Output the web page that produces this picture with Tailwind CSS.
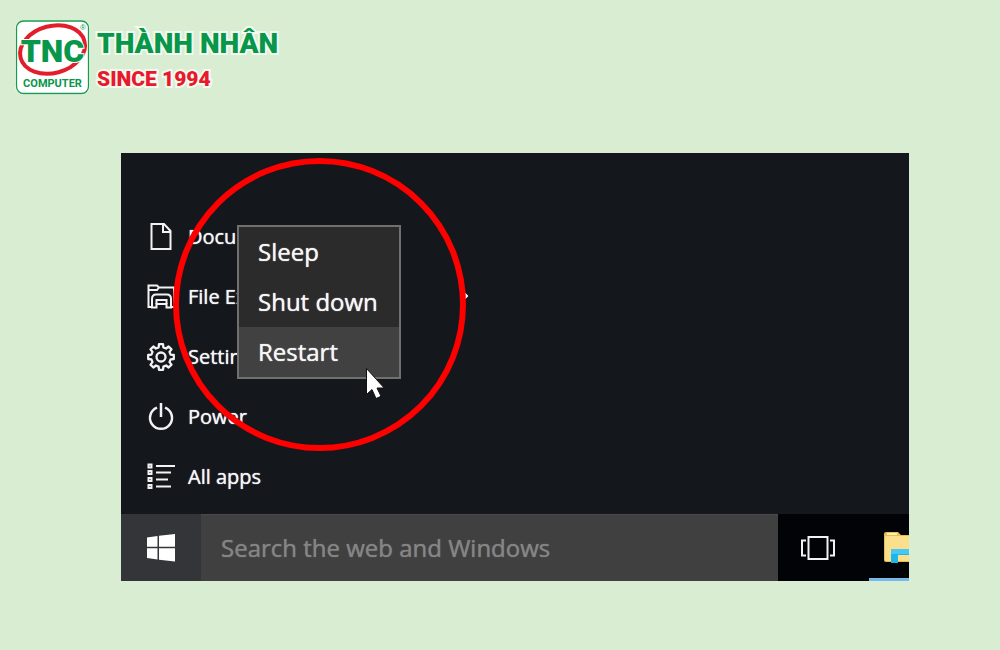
<!DOCTYPE html>
<html lang="vi">
  <head>
    <meta charset="UTF-8" />
    <meta name="viewport" content="width=device-width, initial-scale=1.0" />
    <script src="https://cdn.jsdelivr.net/npm/@tailwindcss/browser@4"></script>
    <title>Thành Nhân TNC</title>
  </head>
  <body class="min-h-screen bg-[#d9edd3] font-['Open_Sans','Noto_Sans',sans-serif]">
    <header class="flex items-start gap-[7px] px-[15px] pt-5">
      <svg class="h-[75px] w-[75px] shrink-0" viewBox="0 0 75 75" role="img" aria-label="TNC Computer">
        <rect width="75" height="75" rx="9" fill="#f2faef" />
        <rect x="1.500" y="1" width="72" height="72.500" rx="7" fill="#fff" stroke="#1a9a50" stroke-width="1.300" />
        <ellipse cx="37.500" cy="29.500" rx="33" ry="23.500" transform="rotate(-15 37.500 29.500)" fill="none" stroke="#e31e2b" stroke-width="4" />
        <text x="37.500" y="42" text-anchor="middle" font-family="Roboto, sans-serif" font-weight="900" font-size="32" fill="#07964a" stroke="#fff" stroke-width="2" paint-order="stroke">TNC</text>
        <text x="68" y="10" text-anchor="middle" font-family="Liberation Sans, sans-serif" font-size="8" fill="#07964a">®</text>
        <text x="37.500" y="67" text-anchor="middle" font-family="Roboto, sans-serif" font-weight="700" font-size="11" fill="#07964a">COMPUTER</text>
      </svg>
      <div class="pt-1 font-['Roboto',sans-serif] font-black whitespace-nowrap">
        <p class="text-[28px] leading-10 text-[#07964a] [-webkit-text-stroke:4px_#f2faef] [paint-order:stroke_fill]">THÀNH NHÂN</p>
        <p class="text-[21px] leading-[30px] text-[#e8192c] [-webkit-text-stroke:4px_#f2faef] [paint-order:stroke_fill]">SINCE 1994</p>
      </div>
    </header>

    <main class="pt-[58px] pr-[91px] pb-16 pl-[121px]">
      <div class="relative overflow-hidden bg-[#14181c] text-[#f6f6f6]">
        <!-- Start menu -->
        <nav class="pt-[54px] pb-[7px] pl-[26px]">
          <ul class="text-[20px] [text-shadow:0_0_1px_#fff]">
            <li>
              <a href="#" aria-label="Documents" class="flex h-[60px] items-center gap-[13px]">
                <svg class="h-7 w-7" viewBox="0 0 28 28" fill="none" stroke="#f2f2f2" stroke-width="2">
                  <path d="M4.500 1h12.500l6.500 7V26h-19zM16 1v8h7" />
                </svg>
                Docum
              </a>
            </li>
            <li>
              <a href="#" aria-label="File Explorer" class="flex h-[60px] items-center gap-[13px]">
                <svg class="h-7 w-7" viewBox="0 0 28 28" fill="none" stroke="#f2f2f2" stroke-width="2">
                  <path d="M5 24H1.500V2.500H10l2 2h15V24h-3M1.500 7H10l2-2.500" />
                  <path d="M5 24.500V16q0-4.500 4-4.500h11q4 0 4 4.500v8.500h-4.500V21h-10v3.500z" />
                  <path d="M9.500 21v-4h10v4" />
                </svg>
                File Ex
                <svg class="mr-[440px] ml-auto h-4 w-2" viewBox="0 0 8 16" fill="none" stroke="#fff" stroke-width="2">
                  <path d="M1 2l5 5-5 5" />
                </svg>
              </a>
            </li>
            <li>
              <a href="#" aria-label="Settings" class="flex h-[60px] items-center gap-[13px]">
                <svg class="h-7 w-7" viewBox="0 0 28 28" fill="none" stroke="#f2f2f2" stroke-width="2.300" stroke-linejoin="round">
                  <path d="M11.600 4.400L12 1.200h4l.4 3.200 2.700 1.100 2.500-2 2.900 2.900-2 2.500 1.100 2.700 3.200.4v4l-3.200.4-1.100 2.700 2 2.500-2.900 2.900-2.500-2-2.700 1.100-.4 3.200h-4l-.4-3.200-2.700-1.100-2.500 2-2.900-2.900 2-2.500-1.100-2.700-3.200-.4v-4l3.200-.4 1.100-2.700-2-2.500 2.900-2.900 2.500 2z" />
                  <circle cx="14" cy="14" r="4.500" />
                </svg>
                Settin
              </a>
            </li>
            <li>
              <a href="#" class="flex h-[60px] items-center gap-[13px]">
                <svg class="h-7 w-7" viewBox="0 0 28 28" fill="none" stroke="#f2f2f2" stroke-width="2.500">
                  <path d="M10 4.600a11 11 0 1 0 8 0M14 0v14" />
                </svg>
                Power
              </a>
            </li>
            <li>
              <a href="#" class="flex h-[60px] items-center gap-[13px]">
                <svg class="h-7 w-7" viewBox="0 0 28 28" fill="none" stroke="#f2f2f2" stroke-width="2">
                  <path d="M1.500 1.500h3v3h-3zM1.500 8h3v3h-3zM1.500 15h3v3h-3zM1.500 22h3v3h-3z" />
                  <path d="M9 3h19M9 9.500h15M9 16.500h12M9 23.500h15" />
                </svg>
                All apps
              </a>
            </li>
          </ul>
        </nav>

        <!-- Taskbar -->
        <div class="flex h-[67px] bg-[#020306]">
          <button class="flex w-20 shrink-0 items-center bg-[#333539] pl-[26px]" aria-label="Start">
            <svg class="h-7 w-7" viewBox="0 0 28 28" fill="#fff">
              <path d="M0 3.500l10.500-1.500V12.800H0zM12 1.800L28 0v12.800H12zM0 14.300h10.500V25.500L0 24zM12 14.300h16V27.500l-16-1.800z" />
            </svg>
          </button>
          <input
            type="text"
            aria-label="Search"
            placeholder="Search the web and Windows"
            class="min-w-0 flex-1 border-t border-[#4a4a4a] bg-[#404040] px-5 pb-px text-2xl [text-shadow:0_0_1px_#858585] placeholder:text-[#858585]"
          />
          <button class="flex w-[91px] shrink-0 items-center pl-[22px]" aria-label="Task view">
            <svg class="h-6 w-9" viewBox="0 0 36 24" fill="none" stroke="#f2f2f2" stroke-width="2">
              <path d="M8.500 1h19v22h-19zM6 4.500H2v15h4M30 4.500h4v15h-4" />
            </svg>
          </button>
          <button class="flex w-10 shrink-0 items-center overflow-hidden border-b-[3px] border-[#76b9ed] pt-[2px] pl-[15px]" aria-label="File Explorer">
            <svg class="h-[31px] w-[38px] shrink-0" viewBox="0 0 38 31">
              <path d="M0 2q0-2 2-2h12l3 3h21v27H2q-2 0-2-2z" fill="#e9bd52" />
              <path d="M2 4h36v25H2q-1 0-1-1V5z" fill="#fbdf8b" />
              <path d="M3 2h10" stroke="#fff0b8" stroke-width="2" />
              <path d="M7 17h31v14h-6v-8H14v8H7z" fill="#20b5ea" />
              <path d="M7 17h31v5H7z" fill="#45c8f5" />
            </svg>
          </button>
        </div>

        <!-- Power options -->
        <div class="absolute top-[72px] left-[116px] w-[164px] border-2 border-[#707070] bg-[#2b2b2b] text-2xl" role="menu">
          <button class="block h-[50px] w-full px-[19px] text-left [text-shadow:0_0_1px_#fff]" role="menuitem">Sleep</button>
          <button class="block h-[50px] w-full px-[19px] text-left whitespace-nowrap [text-shadow:0_0_1px_#fff]" role="menuitem">Shut down</button>
          <button class="block h-[50px] w-full bg-[#414141] px-[19px] text-left [text-shadow:0_0_1px_#fff]" role="menuitem">Restart</button>
        </div>

        <div class="pointer-events-none absolute top-[5px] left-[52px] h-[293px] w-[293px] rounded-full border-[6px] border-[#fe0000]"></div>

        <svg class="pointer-events-none absolute top-[214px] left-[244px] h-8 w-5" viewBox="0 0 20 32">
          <path d="M1.500 1.500V27.500l5.500-5 4 9 5-2.200-4-8.300h7.200z" fill="#fff" stroke="#111" stroke-width="1" />
        </svg>
      </div>
    </main>
  </body>
</html>
